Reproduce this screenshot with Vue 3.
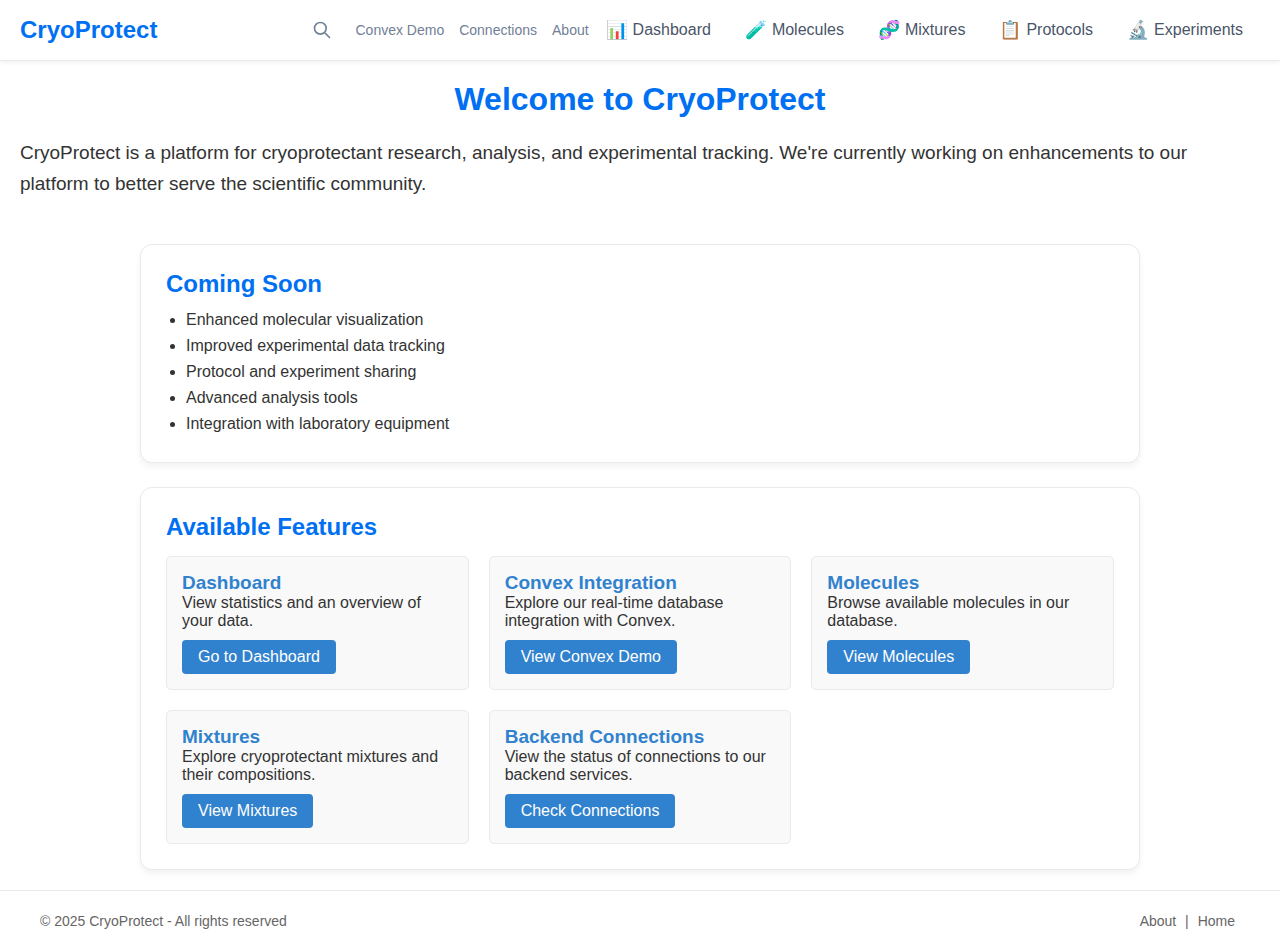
<script setup>
const quickLinks = ['Convex Demo', 'Connections', 'About']

const navItems = [
  { icon: '📊', label: 'Dashboard' },
  { icon: '🧪', label: 'Molecules' },
  { icon: '🧬', label: 'Mixtures' },
  { icon: '📋', label: 'Protocols' },
  { icon: '🔬', label: 'Experiments' },
]

const upcoming = [
  'Enhanced molecular visualization',
  'Improved experimental data tracking',
  'Protocol and experiment sharing',
  'Advanced analysis tools',
  'Integration with laboratory equipment',
]

const features = [
  { title: 'Dashboard', text: 'View statistics and an overview of your data.', action: 'Go to Dashboard' },
  { title: 'Convex Integration', text: 'Explore our real-time database integration with Convex.', action: 'View Convex Demo' },
  { title: 'Molecules', text: 'Browse available molecules in our database.', action: 'View Molecules' },
  { title: 'Mixtures', text: 'Explore cryoprotectant mixtures and their compositions.', action: 'View Mixtures' },
  { title: 'Backend Connections', text: 'View the status of connections to our backend services.', action: 'Check Connections' },
]
</script>

<template>
  <div class="page">
    <header class="header">
      <a class="brand" href="#">CryoProtect</a>
      <div class="header-nav">
        <button class="search" type="button" aria-label="Search">
          <svg width="20" height="20" viewBox="0 0 24 24" fill="none" stroke="currentColor" stroke-width="2" stroke-linecap="round" stroke-linejoin="round" aria-hidden="true">
            <path d="M21 21l-6-6m2-5a7 7 0 11-14 0 7 7 0 0114 0z" />
          </svg>
        </button>
        <nav class="quick-links" aria-label="Quick links">
          <a v-for="link in quickLinks" :key="link" href="#">{{ link }}</a>
        </nav>
        <nav class="main-links" aria-label="Main">
          <a v-for="item in navItems" :key="item.label" href="#">
            <span class="emoji" aria-hidden="true">{{ item.icon }}</span>
            <span>{{ item.label }}</span>
          </a>
        </nav>
      </div>
    </header>

    <main class="main">
      <h1>Welcome to CryoProtect</h1>
      <p class="intro">
        CryoProtect is a platform for cryoprotectant research, analysis, and experimental tracking.
        We're currently working on enhancements to our platform to better serve the scientific community.
      </p>

      <div class="sections">
        <section class="card">
          <h2>Coming Soon</h2>
          <ul class="upcoming">
            <li v-for="entry in upcoming" :key="entry">{{ entry }}</li>
          </ul>
        </section>

        <section class="card">
          <h2>Available Features</h2>
          <div class="features">
            <article v-for="feature in features" :key="feature.title" class="feature">
              <h3>{{ feature.title }}</h3>
              <p>{{ feature.text }}</p>
              <a class="action" href="#">{{ feature.action }}</a>
            </article>
          </div>
        </section>
      </div>
    </main>

    <footer class="footer">
      <p>© 2025 CryoProtect - All rights reserved</p>
      <div class="footer-links">
        <a href="#">About</a> | <a href="#">Home</a>
      </div>
    </footer>
  </div>
</template>

<style>
body {
  margin: 0;
  background: #fff;
}
</style>

<style scoped>
.page {
  display: flex;
  flex-direction: column;
  min-height: 100vh;
  color: #333;
  font-family: "Liberation Sans", Arial, sans-serif;
  font-size: 16px;
}

h1,
h2,
h3,
p,
ul {
  margin: 0;
}

a {
  color: inherit;
  text-decoration: none;
}

.header {
  display: flex;
  align-items: center;
  justify-content: space-between;
  min-height: 60px;
  padding: 0 20px;
  border-bottom: 1px solid #eaeaea;
  box-shadow: 0 2px 4px rgba(0, 0, 0, 0.05);
}

.brand {
  color: #0070f3;
  font-size: 24px;
  font-weight: 700;
}

.header-nav,
.quick-links,
.main-links,
.main-links a {
  display: flex;
  align-items: center;
}

.search {
  display: flex;
  margin-right: 15px;
  padding: 8px;
  border: 0;
  background: none;
  color: #718096;
}

.quick-links {
  gap: 15px;
  color: #718096;
  font-size: 14px;
}

.main-links {
  color: #4a5568;
}

.main-links a {
  gap: 5px;
  padding: 8px 17px;
}

.emoji {
  font-size: 18px;
}

.main {
  flex: 1;
  padding: 20px;
}

h1 {
  margin-bottom: 19px;
  color: #0070f3;
  font-size: 32px;
  text-align: center;
}

.intro {
  font-size: 19px;
  line-height: 31px;
}

.sections {
  display: flex;
  flex-direction: column;
  gap: 24px;
  max-width: 1000px;
  margin: 45px auto 0;
}

.card {
  padding: 25px;
  border: 1px solid #eaeaea;
  border-radius: 12px;
  background: #fff;
  box-shadow: 0 4px 6px rgba(0, 0, 0, 0.05);
}

h2 {
  color: #0070f3;
  font-size: 24px;
}

.upcoming {
  margin-top: 9px;
  padding-left: 20px;
  line-height: 26px;
}

.features {
  display: grid;
  grid-template-columns: repeat(auto-fill, minmax(250px, 1fr));
  gap: 20px;
  margin-top: 15px;
}

.feature {
  padding: 15px;
  border: 1px solid #eaeaea;
  border-radius: 5px;
  background: #f9f9f9;
  line-height: 18px;
}

h3 {
  color: #3182ce;
  font-size: 19px;
  line-height: 22px;
}

.action {
  display: inline-block;
  margin-top: 10px;
  padding: 8px 16px;
  border-radius: 4px;
  background: #3182ce;
  color: #fff;
  vertical-align: top;
}

.footer {
  display: flex;
  align-items: center;
  justify-content: space-between;
  min-height: 59px;
  padding: 0 40px;
  border-top: 1px solid #eaeaea;
  color: #666;
  font-size: 14px;
}

.footer-links a {
  margin: 0 5px;
}
</style>
